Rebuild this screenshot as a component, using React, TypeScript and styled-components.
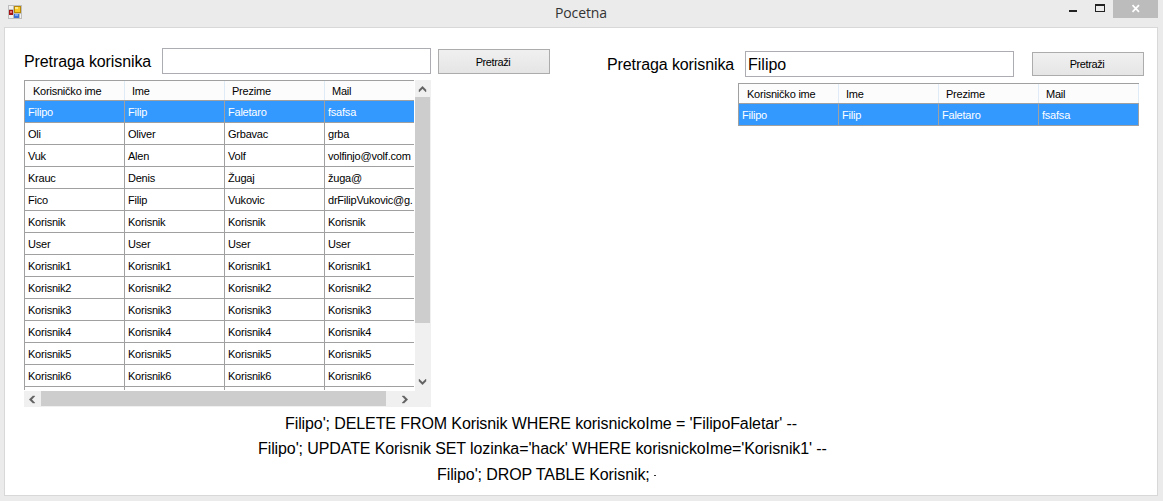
import React from 'react';
import styled, { createGlobalStyle } from 'styled-components';

const Global = createGlobalStyle`
  * { box-sizing: border-box; }
  body { margin: 0; background: #ebebeb; font-family: "Liberation Sans", Arial, sans-serif; color: #000; overflow: hidden; }
`;

const Window = styled.div`
  width: 1163px;
  height: 501px;
  padding: 0 5px 5px 4px;
  background: #ebebeb;
  display: flex;
  flex-direction: column;
`;

const TitleBar = styled.header`
  height: 27px;
  display: grid;
  grid-template-columns: 1fr auto 1fr;
  align-items: start;
`;

const AppIcon = styled.svg`
  margin: 5px 0 0 4px;
`;

const Title = styled.h1`
  margin: 0;
  font: 400 14px/25px "Open Sans", "Noto Sans", sans-serif;
  letter-spacing: -0.1px;
  color: #333;
`;

const Controls = styled.div`
  display: flex;
  justify-content: flex-end;
`;

const Client = styled.main`
  height: 469px;
  background: #fff;
  border: 1px solid #d8d8d8;
  display: flex;
  flex-direction: column;
`;

const Panels = styled.div`
  display: flex;
  height: 387px;
  padding: 20px 0 0 19px;
`;

const Panel = styled.section<{ $w: number; $top?: number }>`
  width: ${p => p.$w}px;
  padding-top: ${p => p.$top || 0}px;
  flex: none;
`;

const SearchRow = styled.div`
  display: flex;
  height: 32px;
  align-items: flex-start;
`;

const Label = styled.label`
  width: 138px;
  font-size: 16px;
  line-height: 28px;
  letter-spacing: -0.1px;
  white-space: nowrap;
`;

const Input = styled.input`
  width: 269px;
  height: 26px;
  padding: 2px 2px 0;
  border: 1px solid #abadb3;
  border-radius: 0;
  background: #fff;
  font: 16px "Liberation Sans", Arial, sans-serif;
  outline: none;
`;

const Button = styled.button<{ $gap: number; $h: number }>`
  width: 112px;
  height: ${p => p.$h}px;
  margin: 1px 0 0 ${p => p.$gap}px;
  padding: 0 2px 0 0;
  border: 1px solid #acacac;
  border-radius: 0;
  background: linear-gradient(#f0f0f0, #e5e5e5);
  font: 11px/22px "Liberation Sans", Arial, sans-serif;
  letter-spacing: -0.4px;
  color: #000;
`;

const GridFrame = styled.div<{ $scroll?: boolean }>`
  display: grid;
  grid-template-columns: ${p => (p.$scroll ? '391px 16px' : '401px')};
  grid-template-rows: ${p => (p.$scroll ? '311px 16px' : 'auto')};
  margin-left: ${p => (p.$scroll ? 0 : 131)}px;
`;

const GridView = styled.div<{ $w: number; $h: number }>`
  width: ${p => p.$w}px;
  height: ${p => p.$h}px;
  overflow: hidden;
  border: solid #a0a0a0;
  border-width: 1px 0 0 1px;
`;

const Row = styled.div<{ $selected?: boolean }>`
  display: grid;
  grid-template-columns: repeat(4, 100px);
  width: 400px;
  height: 22px;
  border-bottom: 1px solid #a0a0a0;
  background: ${p => (p.$selected ? '#3399ff' : '#fff')};
  color: ${p => (p.$selected ? '#fff' : '#000')};
`;

const Cell = styled.div`
  padding-left: 3px;
  border-right: 1px solid #a0a0a0;
  font-size: 11px;
  line-height: 22px;
  letter-spacing: -0.22px;
  white-space: nowrap;
  overflow: hidden;
`;

const HeaderRow = styled(Row)`
  height: 20px;
  background: #fcfcfc;
`;

const HeaderCell = styled(Cell)`
  padding-left: 7px;
  border-right-color: #e0ebf8;
  line-height: 20px;
  &:first-child { padding-left: 8px; }
`;

const VTrack = styled.div`
  grid-row: 1 / 3;
  grid-column: 2;
  background: #f0f0f0;
  display: flex;
  flex-direction: column;
`;

const HTrack = styled.div`
  background: #f0f0f0;
  display: flex;
`;

const VThumb = styled.div`
  width: 15px;
  height: 226px;
  background: #cdcdcd;
`;

const HThumb = styled.div`
  width: 345px;
  height: 15px;
  background: #cdcdcd;
`;

const Spacer = styled.div`
  flex: 1;
`;

const Corner = styled.div`
  flex: 0 0 16px;
`;

const ArrowIcon = styled.svg`
  flex: none;
`;

const Queries = styled.div`
  padding-left: 253px;
`;

const Query = styled.p<{ $indent: number; $h: number }>`
  margin: 0 0 0 ${p => p.$indent}px;
  height: ${p => p.$h}px;
  font-size: 16px;
  line-height: 18px;
  letter-spacing: -0.1px;
  white-space: pre;
`;

const Dot = styled.span`
  display: inline-block;
  width: 1.5px;
  height: 1px;
  background: #333;
  vertical-align: 4px;
`;

const columns = ['Korisničko ime', 'Ime', 'Prezime', 'Mail'];
const same = (s: string) => [s, s, s, s];
const users = [
  ['Filipo', 'Filip', 'Faletaro', 'fsafsa'],
  ['Oli', 'Oliver', 'Grbavac', 'grba'],
  ['Vuk', 'Alen', 'Volf', 'volfinjo@volf.com'],
  ['Krauc', 'Denis', 'Žugaj', 'žuga@'],
  ['Fico', 'Filip', 'Vukovic', 'drFilipVukovic@g.'],
  same('Korisnik'),
  same('User'),
  ...[1, 2, 3, 4, 5, 6].map(n => same('Korisnik' + n)),
  same(''),
];

const turns = { up: 0, right: 90, down: 180, left: 270 };

function Arrow({ dir }: { dir: keyof typeof turns }) {
  return (
    <ArrowIcon width="17" height="17" viewBox="0 0 17 17">
      <path
        d="M4 9.8 7.5 6.2 11 9.8V12L7.5 8.8 4 12Z"
        fill="#606060"
        stroke="#606060"
        strokeWidth=".4"
        transform={`rotate(${turns[dir]} 7.5 8.5)`}
      />
    </ArrowIcon>
  );
}

function Table({ rows, w, h }: { rows: string[][]; w: number; h: number }) {
  return (
    <GridView $w={w} $h={h}>
      <HeaderRow>{columns.map(c => <HeaderCell key={c}>{c}</HeaderCell>)}</HeaderRow>
      {rows.map((r, i) => (
        <Row key={i} $selected={i === 0}>
          {r.map((v, j) => <Cell key={j}>{v}</Cell>)}
        </Row>
      ))}
    </GridView>
  );
}

export default function App() {
  return (
    <Window>
      <Global />
      <TitleBar>
        <AppIcon width="14" height="14" viewBox="0 0 14 14" shapeRendering="crispEdges">
          <path fill="#bdbdbd" d="M0 0h14v14H0z" />
          <path fill="#f0f0f0" d="M1 1h4v3H1zM1 10h4v3H1zM12 9h1v4h-1z" />
          <path fill="#a31515" d="M1 5h4v5H1z" />
          <path fill="#e87070" d="M2 6h2v2H2z" />
          <path fill="#b88708" d="M6 1h7v7H6z" />
          <path fill="#f7c928" d="M7 2h5v5H7z" />
          <path fill="#ffe88a" d="M7 2h3v2H7z" />
          <path fill="#3c6fd0" d="M6 9h5v4H6z" />
          <path fill="#79a9f5" d="M7 9h3v2H7z" />
        </AppIcon>
        <Title>Pocetna</Title>
        <Controls>
          <svg width="90" height="18" viewBox="0 0 90 18" shapeRendering="crispEdges">
            <path fill="#222" d="M1 10h8v2H1zM27 4h10v8H27z" />
            <path fill="#ebebeb" d="M28 6h8v5h-8z" />
            <path fill="#bcbcbc" d="M45 0h45v18H45z" />
            <path d="m64.5 5.2 6.5 6.6m0-6.6-6.5 6.6" stroke="#fff" strokeWidth="1.7" shapeRendering="auto" />
          </svg>
        </Controls>
      </TitleBar>
      <Client>
        <Panels>
          <Panel $w={583}>
            <SearchRow>
              <Label>Pretraga korisnika</Label>
              <Input />
              <Button $gap={7} $h={25}>Pretraži</Button>
            </SearchRow>
            <GridFrame $scroll>
              <Table rows={users} w={390} h={310} />
              <VTrack>
                <Arrow dir="up" />
                <VThumb />
                <Spacer />
                <Arrow dir="down" />
                <Corner />
              </VTrack>
              <HTrack>
                <Arrow dir="left" />
                <HThumb />
                <Spacer />
                <Arrow dir="right" />
              </HTrack>
            </GridFrame>
          </Panel>
          <Panel $w={540} $top={3}>
            <SearchRow>
              <Label>Pretraga korisnika</Label>
              <Input defaultValue="Filipo" />
              <Button $gap={18} $h={24}>Pretraži</Button>
            </SearchRow>
            <GridFrame>
              <Table rows={users.slice(0, 1)} w={401} h={43} />
            </GridFrame>
          </Panel>
        </Panels>
        <Queries>
          <Query $indent={27} $h={25}>{"Filipo'; DELETE FROM Korisnik WHERE korisnickoIme = 'FilipoFaletar' --"}</Query>
          <Query $indent={0} $h={26}>{"Filipo'; UPDATE Korisnik SET lozinka='hack' WHERE korisnickoIme='Korisnik1' --"}</Query>
          <Query $indent={179} $h={20}>{"Filipo'; DROP TABLE Korisnik; "}<Dot /></Query>
        </Queries>
      </Client>
    </Window>
  );
}
